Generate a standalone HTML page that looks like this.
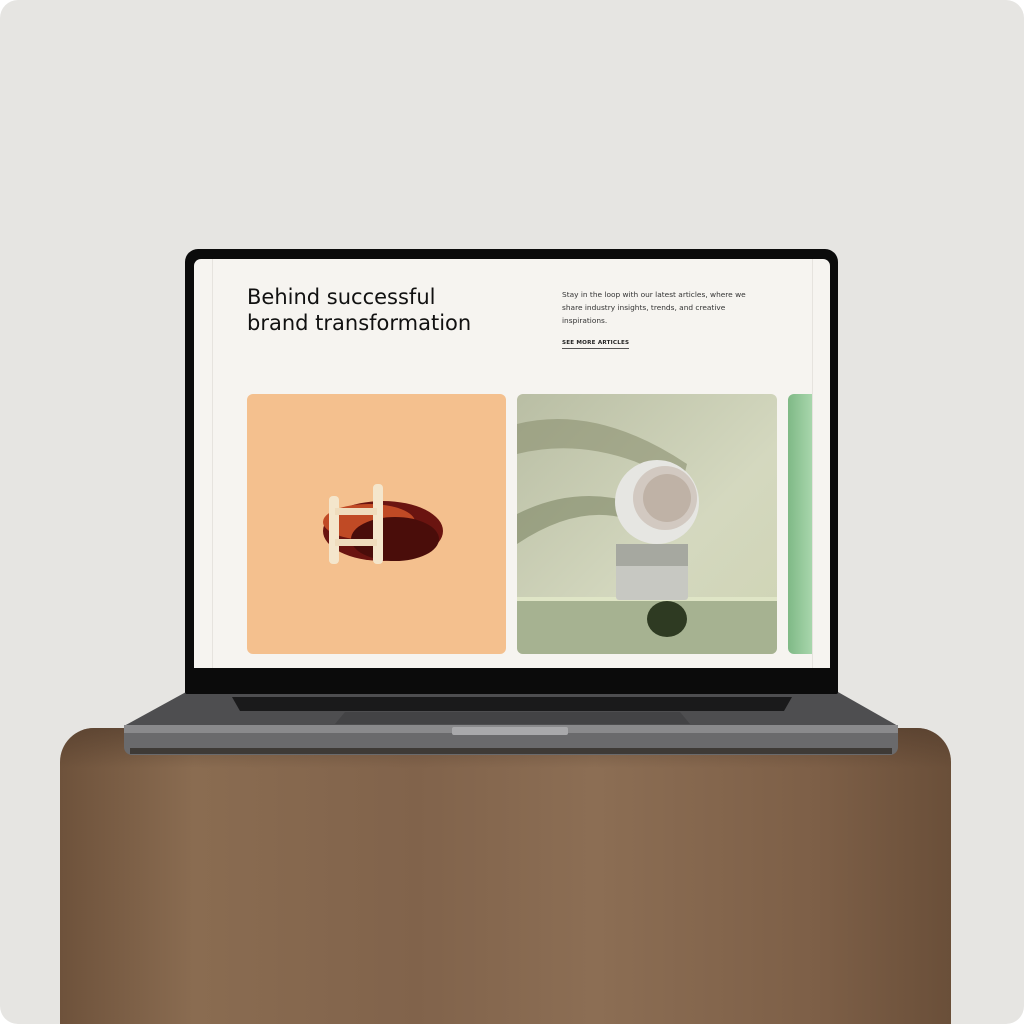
<!DOCTYPE html>
<html><head><meta charset="utf-8"><style>
*{margin:0;padding:0;box-sizing:border-box}
body{width:1024px;height:1024px;background:#fff;overflow:hidden;font-family:"DejaVu Sans","Liberation Sans",sans-serif}
.page{position:absolute;left:0;top:0;width:1024px;height:1024px;background:#e6e5e2;border-radius:18px;overflow:hidden}
.a{position:absolute}
</style></head><body><div class="page">
<div class="a" style="left:60px;top:728px;width:891px;height:320px;border-radius:34px 34px 0 0;background:linear-gradient(90deg,#6e523b 0%,#8a6c51 15%,#81634b 40%,#8c6e54 60%,#7d5f47 85%,#6a4f39 100%)"></div>
<div class="a" style="left:60px;top:728px;width:891px;height:40px;border-radius:34px 34px 0 0;background:linear-gradient(180deg,rgba(80,58,42,.6),rgba(120,90,65,0))"></div>
<svg class="a" style="left:0;top:0" width="1024" height="1024">
<polygon points="186,692 838,692 898,726 124,726" fill="#4e4e50"/>
<polygon points="232,697 792,697 784,711 240,711" fill="#1a1a1b"/>
<polygon points="345,712 680,712 690,724 335,724" fill="#434345"/>
<rect x="124" y="725" width="774" height="30" rx="8" fill="#6a6a6c"/>
<rect x="124" y="725" width="774" height="8" fill="#8a8a8c"/>
<rect x="452" y="727" width="116" height="8" rx="2" fill="#a9a9ab"/>
<rect x="130" y="748" width="762" height="6" fill="#3e3a36"/>
</svg>
<div class="a" style="left:185px;top:249px;width:653px;height:445px;background:#0b0b0b;border-radius:13px 13px 2px 2px"></div>
<div class="a" style="left:194px;top:259px;width:636px;height:409px;background:#f6f4f0;border-radius:7px 7px 0 0"></div>
<div class="a" style="left:212px;top:259px;width:1px;height:409px;background:#e6e3de"></div>
<div class="a" style="left:812px;top:259px;width:1px;height:409px;background:#e6e3de"></div>
<div class="a" style="left:247px;top:284px;font-size:21px;line-height:26px;color:#111;white-space:nowrap">Behind successful<br>brand transformation</div>
<div class="a" style="left:562px;top:288px;font-size:7.4px;line-height:13px;color:#333;width:200px">Stay in the loop with our latest articles, where we share industry insights, trends, and creative inspirations.</div>
<div class="a" style="left:562px;top:340px;font-size:5.6px;font-weight:bold;letter-spacing:.2px;color:#222;border-bottom:1px solid #555;padding-bottom:2px">SEE MORE ARTICLES</div>
<div class="a" style="left:247px;top:394px;width:259px;height:260px;background:#f4c08e;border-radius:6px;overflow:hidden">
<svg width="259" height="260"><ellipse cx="136" cy="137" rx="60" ry="30" fill="#6a1410"/><ellipse cx="122" cy="128" rx="46" ry="18" fill="#c04a25"/><ellipse cx="148" cy="145" rx="44" ry="22" fill="#4a0d0a"/>
<rect x="82" y="102" width="10" height="68" rx="4" fill="#f4e6cc"/><rect x="126" y="90" width="10" height="80" rx="4" fill="#f4e6cc"/><rect x="88" y="114" width="42" height="7" fill="#efdcbd"/><rect x="88" y="145" width="42" height="7" fill="#efdcbd"/></svg></div>
<div class="a" style="left:517px;top:394px;width:260px;height:260px;border-radius:6px;overflow:hidden;background:linear-gradient(135deg,#b9bea4,#d4d8bf 60%,#cfd4b4)">
<svg width="260" height="260"><path d="M0,30 Q80,10 170,70 L165,90 Q80,40 0,60Z" fill="#8a9070" opacity=".6"/><path d="M0,120 Q60,90 120,110 L110,125 Q60,110 0,150Z" fill="#7d8564" opacity=".6"/>
<rect x="0" y="205" width="260" height="55" fill="#a6b291"/><rect x="0" y="203" width="260" height="4" fill="#dfe5c6"/>
<ellipse cx="150" cy="225" rx="20" ry="18" fill="#2e3a22"/>
<rect x="99" y="150" width="72" height="56" rx="3" fill="#c7c8c2"/><rect x="99" y="150" width="72" height="22" fill="#a6a8a0"/>
<circle cx="140" cy="108" r="42" fill="#e6e6e2"/><circle cx="148" cy="104" r="32" fill="#d2c9c1"/><circle cx="150" cy="104" r="24" fill="#bfb2a6"/></svg></div>
<div class="a" style="left:788px;top:394px;width:24px;height:260px;background:linear-gradient(90deg,#7fb986,#a8d6ac);border-radius:6px 0 0 6px"></div>
</div></body></html>
